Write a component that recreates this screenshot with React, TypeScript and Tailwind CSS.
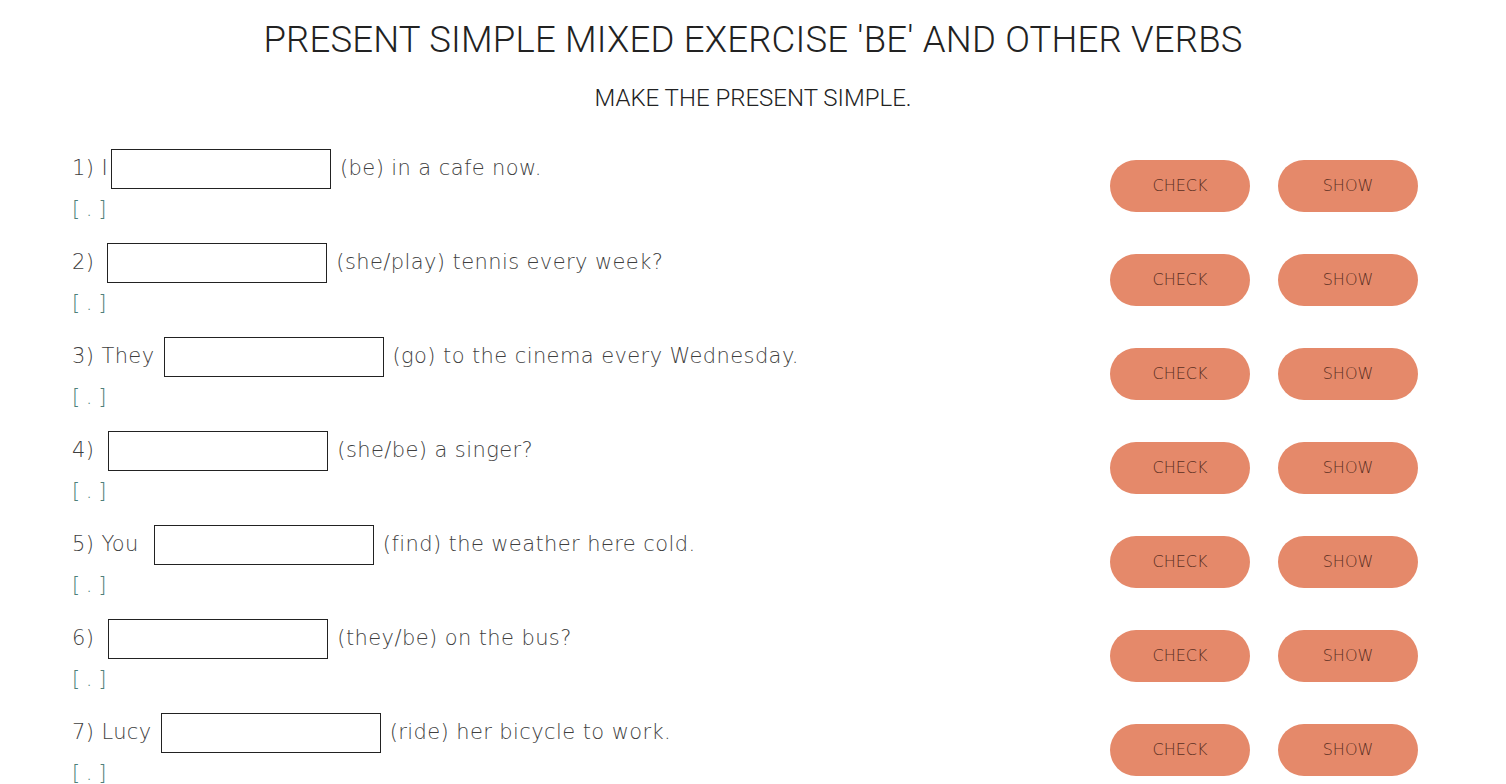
import React from "react";

const rows = [
  { pre: "1) I", post: "(be) in a cafe now.", gap: "mr-[3px]" },
  { pre: "2)", post: "(she/play) tennis every week?", gap: "mr-[13px]" },
  { pre: "3) They", post: "(go) to the cinema every Wednesday.", gap: "mr-[9px]" },
  { pre: "4)", post: "(she/be) a singer?", gap: "mr-[14px]" },
  { pre: "5) You", post: "(find) the weather here cold.", gap: "mr-[15px]" },
  { pre: "6)", post: "(they/be) on the bus?", gap: "mr-[14px]" },
  { pre: "7) Lucy", post: "(ride) her bicycle to work.", gap: "mr-[9px]" },
];

export default function App() {
  return (
    <div className="min-h-screen bg-white" style={{ fontFamily: "'DejaVu Sans', 'Open Sans', sans-serif" }}>
      <div className="pt-[20px] text-center">
        <h1 className="text-[36.5px] leading-[40px] font-light text-[#222] tracking-[0.2px]" style={{ fontFamily: "Roboto, sans-serif" }}>
          PRESENT SIMPLE MIXED EXERCISE 'BE' AND OTHER VERBS
        </h1>
        <p className="mt-[24px] text-[24px] leading-[28px] font-light text-[#222]" style={{ fontFamily: "Roboto, sans-serif" }}>
          MAKE THE PRESENT SIMPLE.
        </p>
      </div>
      <div className="mt-[37px] pl-[72px] pr-[88px] flex flex-col">
        {rows.map((r, i) => (
          <div key={i} className="flex justify-between h-[94px]">
            <div className="flex flex-col">
              <div className="flex items-center h-[40px] text-[21px] font-extralight text-[#3f3f3f] tracking-[0.4px]">
                <span className={r.gap}>{r.pre}</span>
                <div className="w-[220px] h-[40px] border border-[#222] bg-white" />
                <span className="ml-[9px]">{r.post}</span>
              </div>
              <div className="mt-[6px] text-[21px] leading-[28px] font-extralight text-[#4f7f79] tracking-[-0.5px]">[ . ]</div>
            </div>
            <div className="flex gap-[28px] pt-[11px]">
              <button className="w-[140px] h-[52px] rounded-full bg-[#e5896a] text-[#5a2f22] text-[16px] font-extralight">CHECK</button>
              <button className="w-[140px] h-[52px] rounded-full bg-[#e5896a] text-[#5a2f22] text-[16px] font-extralight">SHOW</button>
            </div>
          </div>
        ))}
      </div>
    </div>
  );
}
